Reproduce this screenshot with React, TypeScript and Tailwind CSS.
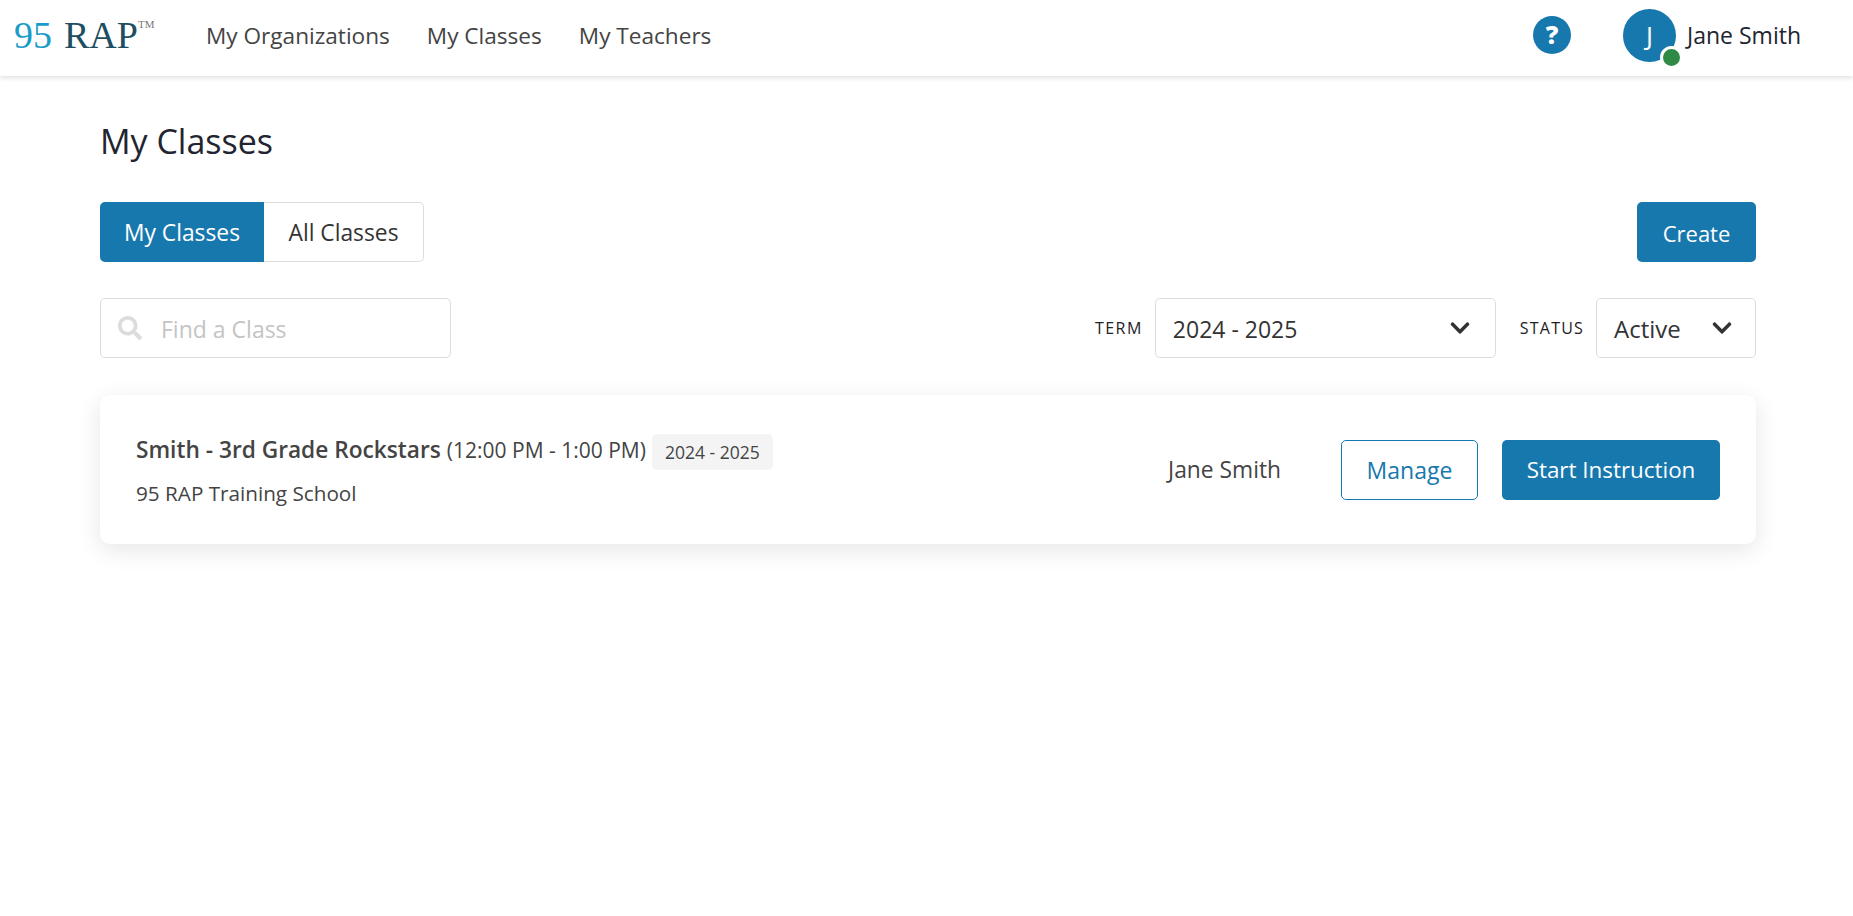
import { FaChevronDown, FaSearch } from "react-icons/fa";

const font = "font-['Open_Sans','Noto_Sans',sans-serif]";

function Select({ value, width, pad, size }: { value: string; width: string; pad: string; size: string }) {
  return (
    <div className={`${width} ${pad} h-[60px] flex items-center justify-between pl-[17px] border border-[#dddddd] rounded-[5px] text-[#333333]`}>
      <span className={`${size} leading-[30px] pt-[1px]`}>{value}</span>
      <FaChevronDown className="text-[22px] text-[#333333]" />
    </div>
  );
}

export default function App() {
  return (
    <div className={`${font} min-h-[916px] bg-white text-[#333333]`}>
      <header className="h-[76px] pb-[6px] flex items-center bg-white shadow-[0_2px_5px_rgba(0,0,0,0.12)]">
        <div className="w-[206px] pl-[14px] flex items-start font-['Liberation_Serif',serif] text-[38px] leading-none">
          <span className="text-[#199cc9]">95</span>
          <span className="ml-[12px] text-[#1d4e63]">RAP</span>
          <span className="text-[11px] text-[#777777] mt-[3px]">TM</span>
        </div>
        <nav className="flex gap-[37px] pt-[1px] text-[22.6px] leading-[30px] text-[#444444]">
          <a>My Organizations</a>
          <a>My Classes</a>
          <a>My Teachers</a>
        </nav>
        <div className="ml-auto flex items-center pr-[52px]">
          <div className="w-[38px] h-[38px] rounded-full bg-[#1778ae] text-white text-[25px] font-extrabold flex items-center justify-center">?</div>
          <div className="relative ml-[52px] w-[53px] h-[53px] rounded-full bg-[#1778ae] text-white text-[26px] flex items-center justify-center">
            J
            <span className="absolute left-[37px] top-[37px] w-[23px] h-[23px] rounded-full bg-[#2f8a45] border-[3px] border-white" />
          </div>
          <span className="ml-[11px] text-[23px] leading-[30px] text-[#22252f]">Jane Smith</span>
        </div>
      </header>

      <main className="pl-[100px] pr-[97px]">
        <h1 className="mt-[44px] text-[34px] leading-[42px] text-[#22252f]">My Classes</h1>

        <div className="mt-[40px] flex justify-between">
          <div className="flex h-[60px] text-[22.8px]">
            <button className="w-[164px] pt-[3px] rounded-l-[5px] bg-[#1778ae] text-white">My Classes</button>
            <button className="w-[160px] pt-[3px] rounded-r-[5px] border border-l-0 border-[#dddddd]">All Classes</button>
          </div>
          <button className="w-[119px] h-[60px] pt-[2px] rounded-[5px] bg-[#1778ae] text-white text-[22px]">Create</button>
        </div>

        <div className="mt-[36px] flex items-center">
          <div className="w-[351px] h-[60px] flex items-center pl-[17px] border border-[#dddddd] rounded-[5px]">
            <FaSearch className="text-[24px] text-[#dcdcdc]" />
            <span className="ml-[19px] pt-[1px] text-[23px] leading-[30px] text-[#c4c4c4]">Find a Class</span>
          </div>
          <span className="ml-auto mr-[12px] text-[16px] tracking-[1.5px] text-[#222222]">TERM</span>
          <Select value="2024 - 2025" width="w-[341px]" pad="pr-[24px]" size="text-[23px]" />
          <span className="ml-[24px] mr-[12px] text-[16px] tracking-[1.2px] text-[#222222]">STATUS</span>
          <Select value="Active" width="w-[160px]" pad="pr-[22px]" size="text-[24px]" />
        </div>

        <section className="mt-[37px] h-[149px] flex items-center px-[36px] rounded-[10px] bg-white shadow-[0_6px_24px_rgba(0,0,0,0.1)]">
          <div className="mt-[2px]">
            <div className="flex items-start h-[36px]">
              <span className="text-[22.7px] leading-[32px] font-semibold text-[#444444]">Smith - 3rd Grade Rockstars</span>
              <span className="ml-[6px] text-[21px] leading-[32px] text-[#444444]">(12:00 PM - 1:00 PM)</span>
              <span className="ml-[6px] px-[13px] h-[36px] flex items-center rounded-[5px] bg-[#f4f4f4] text-[17.5px] text-[#444444]">2024 - 2025</span>
            </div>
            <div className="mt-[9px] text-[20.7px] leading-[28px] text-[#444444]">95 RAP Training School</div>
          </div>
          <span className="ml-auto pt-[2px] text-[22.8px] text-[#444444]">Jane Smith</span>
          <button className="ml-[60px] w-[137px] h-[60px] pt-[1px] rounded-[5px] border border-[#1778ae] text-[#1778ae] text-[23px]">Manage</button>
          <button className="ml-[24px] w-[218px] h-[60px] pt-[1px] rounded-[5px] bg-[#1778ae] text-white text-[22.4px]">Start Instruction</button>
        </section>
      </main>
    </div>
  );
}
